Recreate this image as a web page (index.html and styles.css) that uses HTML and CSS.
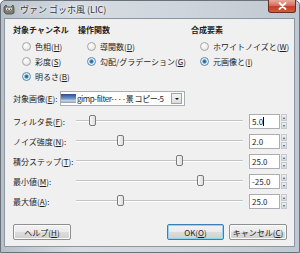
FILE: index.html
```html
<!DOCTYPE html>
<html lang="ja">
<head>
    <meta charset="UTF-8">
    <title>ヴァン ゴッホ風 (LIC)</title>
    <link rel="stylesheet" href="styles.css">
</head>
<body>

    <div class="window">
        <div class="titlebar">
            <svg class="app-icon" width="12" height="11" viewBox="0 0 12 11">
                <path d="M1 3 L3 1 L4 3 L8 3 L10 1 L11 4 L11 9 L9 10 L3 10 L1 8 Z" fill="#7c7c70" stroke="#4a4a44" stroke-width="0.8"/>
                <circle cx="4.5" cy="5" r="1.4" fill="#fff"/>
                <circle cx="7.5" cy="5" r="1.4" fill="#fff"/>
                <circle cx="4.7" cy="5.2" r="0.6" fill="#000"/>
                <circle cx="7.7" cy="5.2" r="0.6" fill="#000"/>
            </svg>
            <span class="title">ヴァン ゴッホ風 (LIC)</span>
            <div class="close">
                <svg width="9" height="8" viewBox="0 0 9 8">
                    <path d="M1.5 1 L7.5 7 M7.5 1 L1.5 7" stroke="#fff" stroke-width="1.8" stroke-linecap="round"/>
                </svg>
            </div>
        </div>

        <div class="client">
            <div class="groups">
                <div class="group">
                    <div class="group-title">対象チャンネル</div>
                    <div class="radio"><span class="dot"></span>色相(<u>H</u>)</div>
                    <div class="radio"><span class="dot"></span>彩度(<u>S</u>)</div>
                    <div class="radio"><span class="dot checked"></span>明るさ(<u>B</u>)</div>
                </div>
                <div class="group">
                    <div class="group-title">操作関数</div>
                    <div class="radio"><span class="dot"></span>導関数(<u>D</u>)</div>
                    <div class="radio"><span class="dot checked"></span>勾配/グラデーション(<u>G</u>)</div>
                </div>
                <div class="group">
                    <div class="group-title">合成要素</div>
                    <div class="radio"><span class="dot"></span>ホワイトノイズと(<u>W</u>)</div>
                    <div class="radio"><span class="dot checked"></span>元画像と(<u>I</u>)</div>
                </div>
            </div>

            <div class="image-row">
                <span class="image-label">対象画像(<u>E</u>):</span>
                <div class="combo">
                    <span class="thumb-img"></span>
                    <span class="combo-text">gimp-filter-···景 コピー-5</span>
                    <span class="combo-btn"></span>
                </div>
            </div>

            <div class="sliders">
                <div class="slider-row">
                    <span class="slider-label">フィルタ長(<u>F</u>):</span>
                    <div class="track"><span class="knob" style="left: 13px"></span></div>
                    <div class="spin"><span class="spin-value">5.0<span class="caret"></span></span><span class="spin-btns"><i class="up"></i><i class="down"></i></span></div>
                </div>
                <div class="slider-row">
                    <span class="slider-label">ノイズ強度(<u>N</u>):</span>
                    <div class="track"><span class="knob" style="left: 41px"></span></div>
                    <div class="spin"><span class="spin-value">2.0</span><span class="spin-btns"><i class="up"></i><i class="down"></i></span></div>
                </div>
                <div class="slider-row">
                    <span class="slider-label">積分ステップ(<u>T</u>):</span>
                    <div class="track"><span class="knob" style="left: 100px"></span></div>
                    <div class="spin"><span class="spin-value">25.0</span><span class="spin-btns"><i class="up"></i><i class="down"></i></span></div>
                </div>
                <div class="slider-row">
                    <span class="slider-label">最小値(<u>M</u>):</span>
                    <div class="track"><span class="knob" style="left: 121px"></span></div>
                    <div class="spin"><span class="spin-value">-25.0</span><span class="spin-btns"><i class="up"></i><i class="down"></i></span></div>
                </div>
                <div class="slider-row">
                    <span class="slider-label">最大値(<u>A</u>):</span>
                    <div class="track"><span class="knob" style="left: 41px"></span></div>
                    <div class="spin"><span class="spin-value">25.0</span><span class="spin-btns"><i class="up"></i><i class="down"></i></span></div>
                </div>
            </div>

            <div class="buttons">
                <button class="btn help">ヘルプ(<u>H</u>)</button>
                <div class="right-buttons">
                    <button class="btn ok">OK(<u>O</u>)</button>
                    <button class="btn">キャンセル(<u>C</u>)</button>
                </div>
            </div>
        </div>
    </div>

</body>
</html>
```

FILE: styles.css
```css
body {
    margin: 0;
    padding: 0;
    width: 300px;
    height: 253px;
    overflow: hidden;
    font-family: "Noto Sans CJK JP", "Noto Sans", sans-serif;
    font-size: 8px;
    color: #1e1e1e;
    background-color: #fff;
}

u {
    text-decoration: underline;
    text-underline-offset: 1px;
}

.window {
    width: 300px;
    height: 253px;
    box-sizing: border-box;
    background: linear-gradient(90deg, #b7c0ca 0%, #d6dce2 25%, #cfd5dc 60%, #bfc7d0 100%);
    border: 1px solid #6b7178;
    border-radius: 5px 5px 0 0;
    display: flex;
    flex-direction: column;
}

.titlebar {
    height: 17px;
    display: flex;
    align-items: center;
    padding-left: 2px;
    position: relative;
}

.app-icon {
    margin-right: 5px;
}

.title {
    font-size: 9px;
    color: #333;
    text-shadow: 0 0 4px #fff, 0 0 2px #fff;
}

.close {
    position: absolute;
    right: 3px;
    top: -1px;
    width: 28px;
    height: 13px;
    box-sizing: border-box;
    border: 1px solid #6e2b22;
    border-top: none;
    border-radius: 0 0 3px 3px;
    background: linear-gradient(#e9a99c, #d7715e 45%, #c33f28 55%, #d25c3c);
    display: flex;
    align-items: center;
    justify-content: center;
}

.client {
    margin: 0 4px 5px 3px;
    flex: 1;
    background-color: #f0f0f0;
    border: 1px solid #8c96a0;
    padding: 5px 0 0 8px;
}

.groups {
    display: grid;
    grid-template-columns: 65px 113px auto;
}

.group-title {
    font-weight: bold;
    line-height: 12px;
    height: 12px;
    margin-bottom: 3px;
}

.radio {
    height: 15px;
    display: flex;
    align-items: center;
    padding-left: 9px;
    white-space: nowrap;
}

.dot {
    width: 7px;
    height: 7px;
    border-radius: 50%;
    border: 1px solid #a6a6a6;
    background: radial-gradient(circle at 40% 35%, #ffffff, #dcdcdc);
    margin-right: 4px;
    flex-shrink: 0;
}

.dot.checked {
    border-color: #5d88a8;
    background: radial-gradient(circle, #1c5a86 0, #3f8ac0 1.6px, #eaf2f8 2.6px, #d8e4ee 100%);
}

.image-row {
    margin-top: 7px;
    display: flex;
    align-items: center;
    height: 15px;
}

.image-label {
    width: 47px;
}

.combo {
    width: 125px;
    height: 15px;
    box-sizing: border-box;
    border: 1px solid #abadb3;
    background-color: #fff;
    display: flex;
    align-items: center;
    position: relative;
}

.thumb-img {
    width: 15px;
    height: 9px;
    margin-right: 1px;
    background: linear-gradient(#2a4d8c, #6f94c8 50%, #c8d4e0 75%, #8a9aa8);
}

.combo-text {
    white-space: nowrap;
    letter-spacing: -0.45px;
}

.combo-btn {
    position: absolute;
    right: 2px;
    top: 1px;
    width: 11px;
    height: 11px;
    box-sizing: border-box;
    border: 1px solid #9ea4ab;
    background: linear-gradient(#f4f4f4, #dcdcdc);
}

.combo-btn::after {
    content: "";
    position: absolute;
    left: 3px;
    top: 4px;
    border-left: 2px solid transparent;
    border-right: 2px solid transparent;
    border-top: 2px solid #111;
}

.sliders {
    margin-top: 5px;
}

.slider-row {
    height: 20px;
    display: grid;
    grid-template-columns: 63px 167px auto;
    align-items: center;
}

.slider-label {
    white-space: nowrap;
}

.track {
    height: 2px;
    border-top: 1px solid #c4c4c4;
    border-bottom: 1px solid #fff;
    box-sizing: border-box;
    position: relative;
}

.knob {
    position: absolute;
    top: -6px;
    width: 7px;
    height: 11px;
    box-sizing: border-box;
    border: 1px solid #7a7a7a;
    border-radius: 2px;
    background: linear-gradient(90deg, #f8f8f8, #dedede);
}

.spin {
    display: flex;
    height: 15px;
    margin-left: 6px;
}

.spin-value {
    width: 31px;
    box-sizing: border-box;
    border: 1px solid #abadb3;
    background-color: #fff;
    padding-left: 2px;
    line-height: 13px;
}

.caret {
    display: inline-block;
    width: 1px;
    height: 9px;
    background-color: #000;
    vertical-align: -1px;
}

.spin-btns {
    width: 6px;
    margin-left: 1px;
    display: flex;
    flex-direction: column;
    gap: 1px;
}

.spin-btns i {
    flex: 1;
    background: linear-gradient(#eef0f3, #d4d9df);
    border: 1px solid #c4c9cf;
    box-sizing: border-box;
    position: relative;
}

.spin-btns i::after {
    content: "";
    position: absolute;
    left: 1px;
    top: 2px;
    border-left: 1px solid transparent;
    border-right: 1px solid transparent;
}

.spin-btns .up::after {
    border-bottom: 2px solid #4a5a70;
}

.spin-btns .down::after {
    border-top: 2px solid #4a5a70;
}

.buttons {
    margin-top: 13px;
    display: flex;
    justify-content: space-between;
    padding-right: 7px;
}

.right-buttons {
    display: flex;
    gap: 5px;
}

.btn {
    font-family: inherit;
    font-size: 8px;
    color: #1e1e1e;
    height: 16px;
    width: 58px;
    padding: 0;
    border: 1px solid #8e8f8f;
    border-radius: 2px;
    background: linear-gradient(#f2f2f2 0%, #ebebeb 50%, #dddddd 51%, #cfcfcf 100%);
    box-shadow: inset 0 0 0 1px #fbfbfb;
}

.btn.help {
    width: 58px;
}

.btn.ok {
    width: 57px;
    border-color: #3c7fb1;
    box-shadow: inset 0 0 0 1px #8fd4f5;
}
```
